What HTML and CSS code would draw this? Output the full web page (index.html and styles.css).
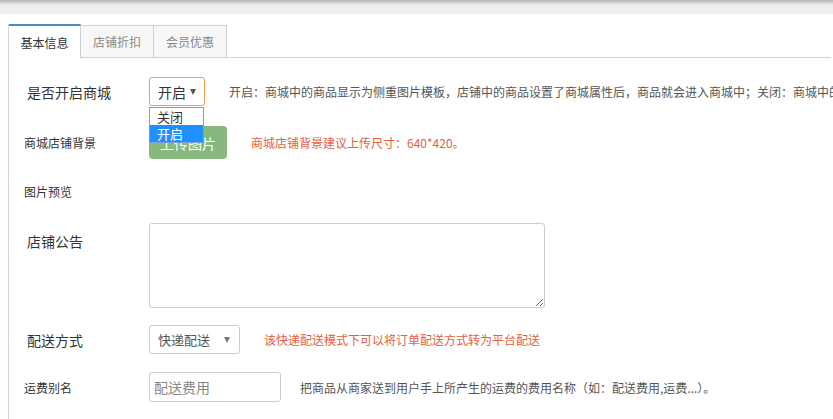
FILE: index.html
```html
<!DOCTYPE html>
<html lang="zh-CN">
<head>
<meta charset="utf-8">
<link rel="stylesheet" href="styles.css">
</head>
<body>
<div class="topbar"></div>
<div class="page">
  <div class="panel">
    <div class="tabs">
      <div class="tab active">基本信息</div>
      <div class="tab">店铺折扣</div>
      <div class="tab">会员优惠</div>
      <div class="tab-fill"></div>
    </div>
    <div class="content">
      <div class="row r1">
        <div class="label big">是否开启商城</div>
        <div class="ctl">
          <div class="select focus">开启<span class="arrow"></span></div>
          <ul class="dropdown">
            <li>关闭</li>
            <li class="sel">开启</li>
          </ul>
        </div>
        <div class="help">开启：商城中的商品显示为侧重图片模板，店铺中的商品设置了商城属性后，商品就会进入商城中；关闭：商城中的商品显示为普通模板</div>
      </div>
      <div class="row r2">
        <div class="label">商城店铺背景</div>
        <div class="ctl"><button class="upload">上传图片</button></div>
        <div class="help red">商城店铺背景建议上传尺寸：640*420。</div>
      </div>
      <div class="row r3">
        <div class="label">图片预览</div>
      </div>
      <div class="row r4">
        <div class="label big top">店铺公告</div>
        <div class="ctl"><textarea class="area"></textarea></div>
      </div>
      <div class="row r5">
        <div class="label big">配送方式</div>
        <div class="ctl"><div class="select wide">快递配送<span class="arrow"></span></div></div>
        <div class="help red">该快递配送模式下可以将订单配送方式转为平台配送</div>
      </div>
      <div class="row r6">
        <div class="label">运费别名</div>
        <div class="ctl"><div class="input">配送费用</div></div>
        <div class="help h6">把商品从商家送到用户手上所产生的运费的费用名称（如：配送费用,运费...）。</div>
      </div>
    </div>
  </div>
</div>
</body>
</html>
```
FILE: styles.css
```css
html, body {
  margin: 0;
  padding: 0;
  background: #fff;
  font-family: "Noto Sans CJK SC", "Noto Sans", sans-serif;
  color: #333;
  overflow: hidden;
  width: 833px;
  height: 419px;
}
.topbar {
  height: 14px;
  background: linear-gradient(#b3b3bb 0, #d6d6db 3px, #ececee 5px, #f0f0f0 8px, #f0f0f0 100%);
}
.page {
  padding: 10px 2px 0 8px;
}
.panel {
  border-left: 1px solid #c8d5e2;
  height: 400px;
}
.tabs {
  display: flex;
  height: 34px;
}
.tab {
  width: 73px;
  box-sizing: border-box;
  border: 1px solid #c8d2dc;
  border-left: none;
  background: #f7f7f7;
  color: #888;
  font-size: 12px;
  display: flex;
  align-items: center;
  justify-content: center;
  margin-top: 1px;
}
.tab.active {
  background: #fff;
  color: #333;
  border-top: 2px solid #4f8fbf;
  border-bottom: none;
  margin-top: 0;
  width: 72px;
}
.tab-fill {
  flex: 1;
  border-bottom: 1px solid #c8d2dc;
}
.content {
  position: relative;
}
.row {
  display: flex;
  align-items: center;
  white-space: nowrap;
}
.label {
  width: 140px;
  flex: none;
  box-sizing: border-box;
  padding-left: 15px;
  font-size: 12px;
  color: #333;
}
.label.big {
  padding-left: 18px;
  font-size: 14px;
}
.ctl {
  position: relative;
  flex: none;
}
.help {
  margin-left: 24px;
  font-size: 12px;
  color: #555;
}
.help.red {
  color: #e5603f;
}
.help.h6 {
  margin-left: 19px;
}
.r1 { margin-top: 19px; height: 29px; }
.r2 { margin-top: 20px; height: 33px; }
.r3 { margin-top: 22px; height: 20px; }
.r4 { margin-top: 22px; height: 85px; align-items: flex-start; }
.r5 { margin-top: 17px; height: 29px; }
.r6 { margin-top: 18px; height: 30px; }
.label.top { padding-top: 8px; }
.select {
  box-sizing: border-box;
  width: 56px;
  height: 29px;
  border: 1px solid #ccc;
  border-radius: 3px;
  padding-left: 8px;
  font-size: 14px;
  color: #333;
  display: flex;
  align-items: center;
  position: relative;
  background: #fff;
}
.select.focus {
  border-color: #f0a04a;
}
.select .arrow {
  position: absolute;
  right: 8px;
  top: 11px;
  width: 0;
  height: 0;
  border-left: 3.5px solid transparent;
  border-right: 3.5px solid transparent;
  border-top: 6px solid #555;
}
.select.wide {
  width: 91px;
  font-size: 13px;
  color: #555;
}
.select.wide .arrow { right: 9px; border-top-color: #777; }
.dropdown {
  position: absolute;
  left: 0;
  top: 30px;
  width: 55px;
  margin: 0;
  padding: 0;
  list-style: none;
  border: 1px solid #7a9fd8;
  box-sizing: border-box;
  background: #fff;
  z-index: 5;
}
.dropdown li {
  height: 17px;
  line-height: 17px;
  padding-left: 7px;
  font-size: 13px;
  color: #333;
}
.dropdown li.sel {
  background: #1e90ff;
  color: #fff;
}
.upload {
  width: 78px;
  height: 33px;
  border: none;
  border-radius: 4px;
  background: #87b97f;
  color: #fff;
  font-family: inherit;
  font-size: 14px;
  padding: 0;
}
.area {
  display: block;
  width: 396px;
  height: 85px;
  box-sizing: border-box;
  border: 1px solid #ccc;
  border-radius: 3px;
  margin: 0;
  font-family: inherit;
}
.input {
  box-sizing: border-box;
  width: 132px;
  height: 30px;
  border: 1px solid #ccc;
  border-radius: 3px;
  padding-left: 4px;
  font-size: 14px;
  color: #888;
  display: flex;
  align-items: center;
}
```
